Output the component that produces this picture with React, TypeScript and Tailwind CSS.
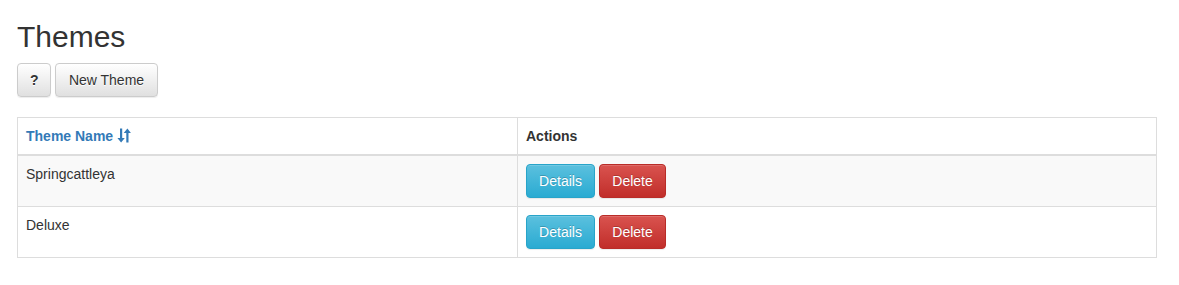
import React from "react";

const SortIcon = () => (
  <svg width="14" height="15" viewBox="0 0 14 15" className="inline-block ml-[4px] align-[-2px]">
    <path d="M3 0.5 h2.2 v9.5 h2.6 L4.1 14.5 L0.4 10 H3 Z" fill="#337ab7" />
    <path d="M9.3 14.5 h2.2 V5 h2.4 L10.4 0.5 L6.7 5 H9.3 Z" fill="#337ab7" />
  </svg>
);

const btnBase =
  "inline-block h-[34px] px-3 text-[14px] leading-[20px] rounded-[4px] border";
const infoBtn = `${btnBase} text-white border-[#28a4c9] bg-[linear-gradient(to_bottom,#5bc0de_0%,#2aabd2_100%)] shadow-[inset_0_1px_0_rgba(255,255,255,0.15),0_1px_1px_rgba(0,0,0,0.075)] [text-shadow:0_-1px_0_rgba(0,0,0,0.2)]`;
const dangerBtn = `${btnBase} text-white border-[#b92c28] bg-[linear-gradient(to_bottom,#d9534f_0%,#c12e2a_100%)] shadow-[inset_0_1px_0_rgba(255,255,255,0.15),0_1px_1px_rgba(0,0,0,0.075)] [text-shadow:0_-1px_0_rgba(0,0,0,0.2)]`;
const defaultBtn = `${btnBase} text-[#333] border-[#ccc] bg-[linear-gradient(to_bottom,#fff_0%,#e0e0e0_100%)] shadow-[inset_0_1px_0_rgba(255,255,255,0.15),0_1px_1px_rgba(0,0,0,0.075)] [text-shadow:0_1px_0_#fff]`;

const rows = ["Springcattleya", "Deluxe"];

export default function App() {
  return (
    <div
      className="min-h-[285px] bg-white text-[#333] text-[14px] leading-[20px] pl-[17px] pt-[20px]"
      style={{ fontFamily: '"Liberation Sans", Arial, sans-serif' }}
    >
      <h2 className="text-[30px] leading-[33px] font-medium mb-[10px]">Themes</h2>
      <div className="flex gap-[4px]">
        <button className={`${defaultBtn} font-bold w-[34px] px-0`}>?</button>
        <button className={`${defaultBtn} w-[103px] px-0`}>New Theme</button>
      </div>
      <table className="mt-[20px] w-[1140px] border border-[#ddd] border-collapse">
        <thead>
          <tr>
            <th className="w-[500px] text-left p-[8px] border border-[#ddd] border-b-2 font-bold">
              <span className="text-[#337ab7]">
                Theme Name
                <SortIcon />
              </span>
            </th>
            <th className="text-left p-[8px] border border-[#ddd] border-b-2 font-bold">Actions</th>
          </tr>
        </thead>
        <tbody>
          {rows.map((r, i) => (
            <tr key={r} className={i % 2 === 0 ? "bg-[#f9f9f9]" : "bg-white"}>
              <td className="align-top p-[8px] border border-[#ddd]">{r}</td>
              <td className="align-top p-[8px] border border-[#ddd]">
                <div className="flex gap-[4px]">
                  <button className={`${infoBtn} w-[69px] px-0`}>Details</button>
                  <button className={`${dangerBtn} w-[67px] px-0`}>Delete</button>
                </div>
              </td>
            </tr>
          ))}
        </tbody>
      </table>
    </div>
  );
}
